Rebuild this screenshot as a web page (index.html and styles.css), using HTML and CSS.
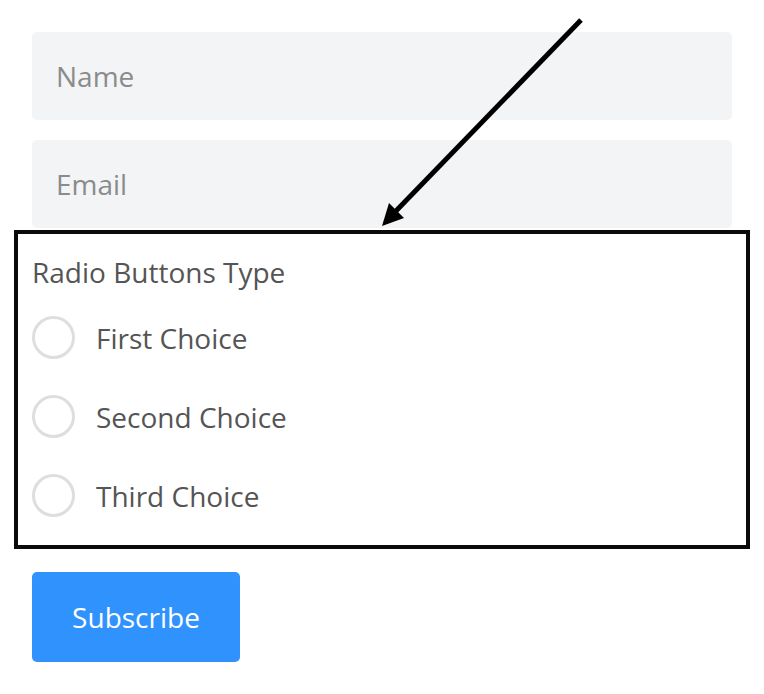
FILE: index.html
```html
<!DOCTYPE html>
<html>
<head>
<meta charset="utf-8">
<link rel="stylesheet" href="styles.css">
</head>
<body>
<form class="form">
  <input class="field" type="text" placeholder="Name">
  <input class="field" type="email" placeholder="Email">
  <div class="group">
    <div class="group-label">Radio Buttons Type</div>
    <label class="choice"><span class="radio"></span><span>First Choice</span></label>
    <label class="choice"><span class="radio"></span><span>Second Choice</span></label>
    <label class="choice"><span class="radio"></span><span>Third Choice</span></label>
  </div>
  <button class="submit" type="button">Subscribe</button>
</form>
<svg class="arrow" width="764" height="694" viewBox="0 0 764 694">
  <line x1="581" y1="20" x2="394" y2="213" stroke="#000" stroke-width="5"/>
  <polygon points="382,226 404,218 389,203" fill="#000"/>
</svg>
</body>
</html>
```
FILE: styles.css
```css
* { box-sizing: border-box; }
html, body { margin: 0; padding: 0; background: #fff; }
body { font-family: "Open Sans", "Noto Sans", sans-serif; }
.form {
  display: flex;
  flex-direction: column;
  padding: 32px;
  width: 764px;
}
.field {
  display: block;
  width: 700px;
  height: 88px;
  border: none;
  border-radius: 5px;
  background: #f3f4f6;
  padding: 0 24px;
  font-family: "Open Sans", "Noto Sans", sans-serif;
  font-size: 28px;
  color: #555;
  margin: 0 0 20px 0;
  outline: none;
}
.field::placeholder { color: #8b8b8b; }
.field + .field { margin-bottom: 2px; }
.group {
  border: 4px solid #0a0a0a;
  margin: 0 -18px;
  padding: 18px 14px 10px 14px;
}
.group-label {
  font-size: 28px;
  line-height: 40px;
  color: #555;
  padding-bottom: 6px;
}
.choice {
  display: flex;
  align-items: center;
  height: 79px;
  font-size: 28px;
  color: #555;
}
.radio {
  width: 43px;
  height: 43px;
  border: 3px solid #dedede;
  border-radius: 50%;
  margin-right: 21px;
  flex: none;
}
.submit {
  align-self: flex-start;
  margin-top: 23px;
  width: 208px;
  height: 90px;
  border: none;
  border-radius: 5px;
  background: #2f92fd;
  color: #fff;
  font-family: "Open Sans", "Noto Sans", sans-serif;
  font-size: 28px;
}
.arrow {
  position: absolute;
  left: 0;
  top: 0;
  pointer-events: none;
}
```
